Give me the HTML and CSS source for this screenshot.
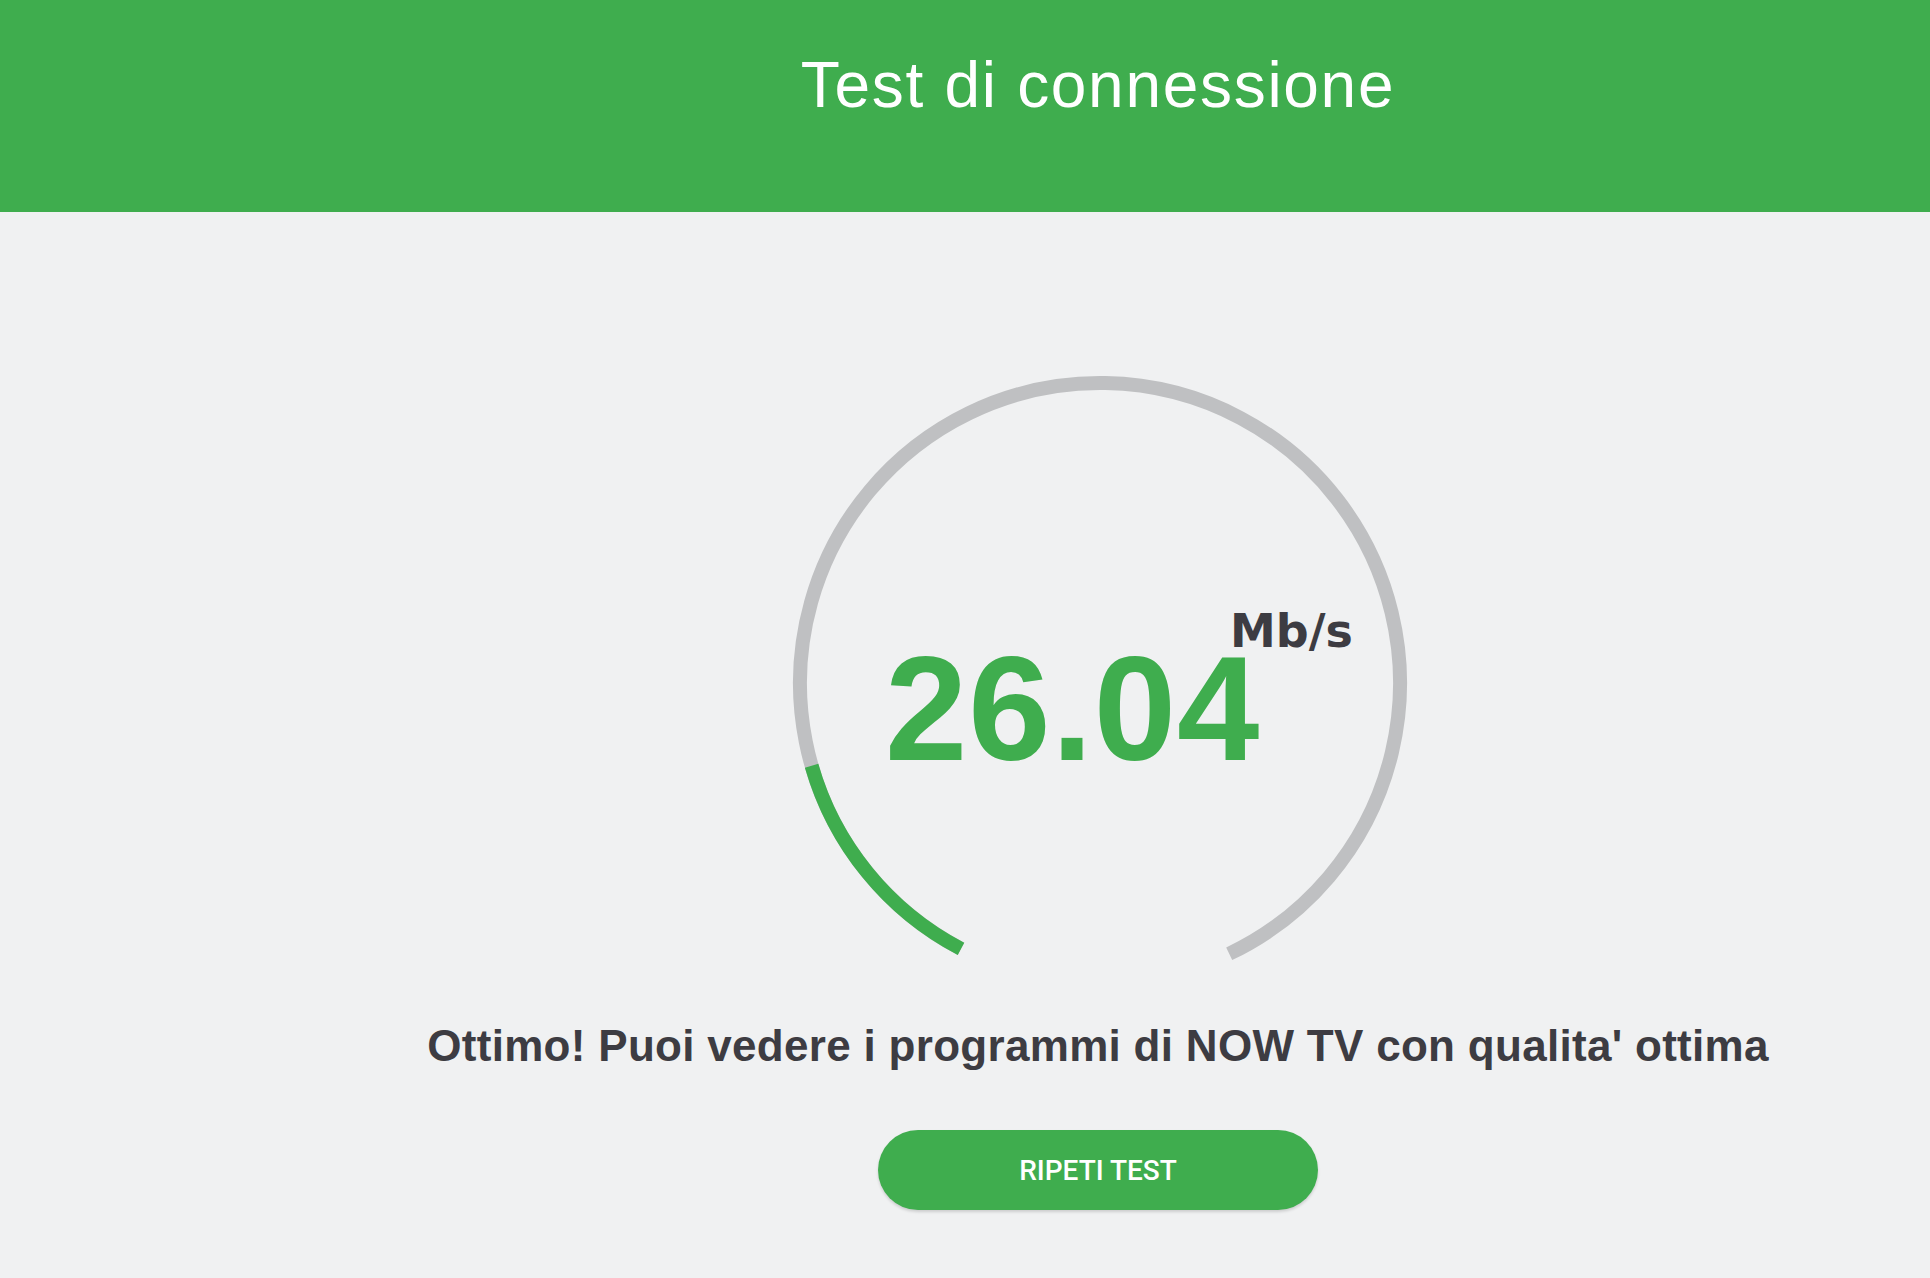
FILE: index.html
```html
<!DOCTYPE html>
<html lang="it">
<head>
<meta charset="utf-8">
<title>Test di connessione</title>
<link rel="stylesheet" href="styles.css">
</head>
<body>
<header class="topbar">
  <div class="topbar-inner">
    <h1 class="title">Test di connessione</h1>
  </div>
</header>
<main class="main">
  <div class="main-inner">
    <div class="gauge">
      <svg class="gauge-svg" width="620" height="620" viewBox="0 0 620 620">
        <path class="track" d="M171.0,575.9 A300,300 0 1 1 439.2,580.8"/>
        <path class="fill" d="M171.0,575.9 A300,300 0 0 1 21.6,392.7"/>
      </svg>
      <span class="value">26.04</span>
      <span class="unit">Mb/s</span>
    </div>
    <p class="message">Ottimo! Puoi vedere i programmi di NOW TV con qualita' ottima</p>
    <button class="btn" type="button">RIPETI TEST</button>
  </div>
</main>
</body>
</html>
```
FILE: styles.css
```css
html, body {
  margin: 0;
  padding: 0;
}
body {
  background: #f0f1f2;
  font-family: "Liberation Sans", Arial, sans-serif;
  width: 1930px;
  min-height: 1278px;
}
.topbar {
  background: #3fad4e;
  height: 212px;
}
.topbar-inner {
  padding-left: 266px;
  display: flex;
  justify-content: center;
}
.title {
  margin: 53px 0 0 0;
  font-size: 64px;
  line-height: 1;
  font-weight: normal;
  color: #ffffff;
  letter-spacing: 1.7px;
}
.main-inner {
  padding-left: 266px;
  display: flex;
  flex-direction: column;
  align-items: center;
  padding-top: 161px;
}
.gauge {
  position: relative;
  width: 620px;
  height: 620px;
  margin-left: 4px;
}
.gauge-svg {
  display: block;
}
.track, .fill {
  fill: none;
  stroke-width: 14;
  stroke-linecap: butt;
}
.track { stroke: #bfc0c2; }
.fill { stroke: #3fad4e; }
.value {
  position: absolute;
  left: 95px;
  top: 281px;
  font-size: 148px;
  line-height: 110px;
  font-weight: bold;
  color: #3fad4e;
  letter-spacing: 1px;
}
.unit {
  position: absolute;
  left: 440px;
  top: 238px;
  font-family: "DejaVu Sans", "Liberation Sans", sans-serif;
  font-size: 46px;
  line-height: 40px;
  font-weight: bold;
  color: #3d3c42;
}
.message {
  margin: 27px 0 0 0;
  font-size: 44px;
  line-height: 52px;
  font-weight: bold;
  color: #3d3c42;
  letter-spacing: 0.3px;
  white-space: nowrap;
}
.btn {
  margin-top: 58px;
  width: 440px;
  height: 80px;
  border: none;
  border-radius: 40px;
  background: #3fad4e;
  color: #ffffff;
  font-family: Roboto, "Liberation Sans", Arial, sans-serif;
  font-weight: 500;
  font-size: 28px;
  box-shadow: 0 2px 3px rgba(0,0,0,0.15);
  cursor: pointer;
}
```
